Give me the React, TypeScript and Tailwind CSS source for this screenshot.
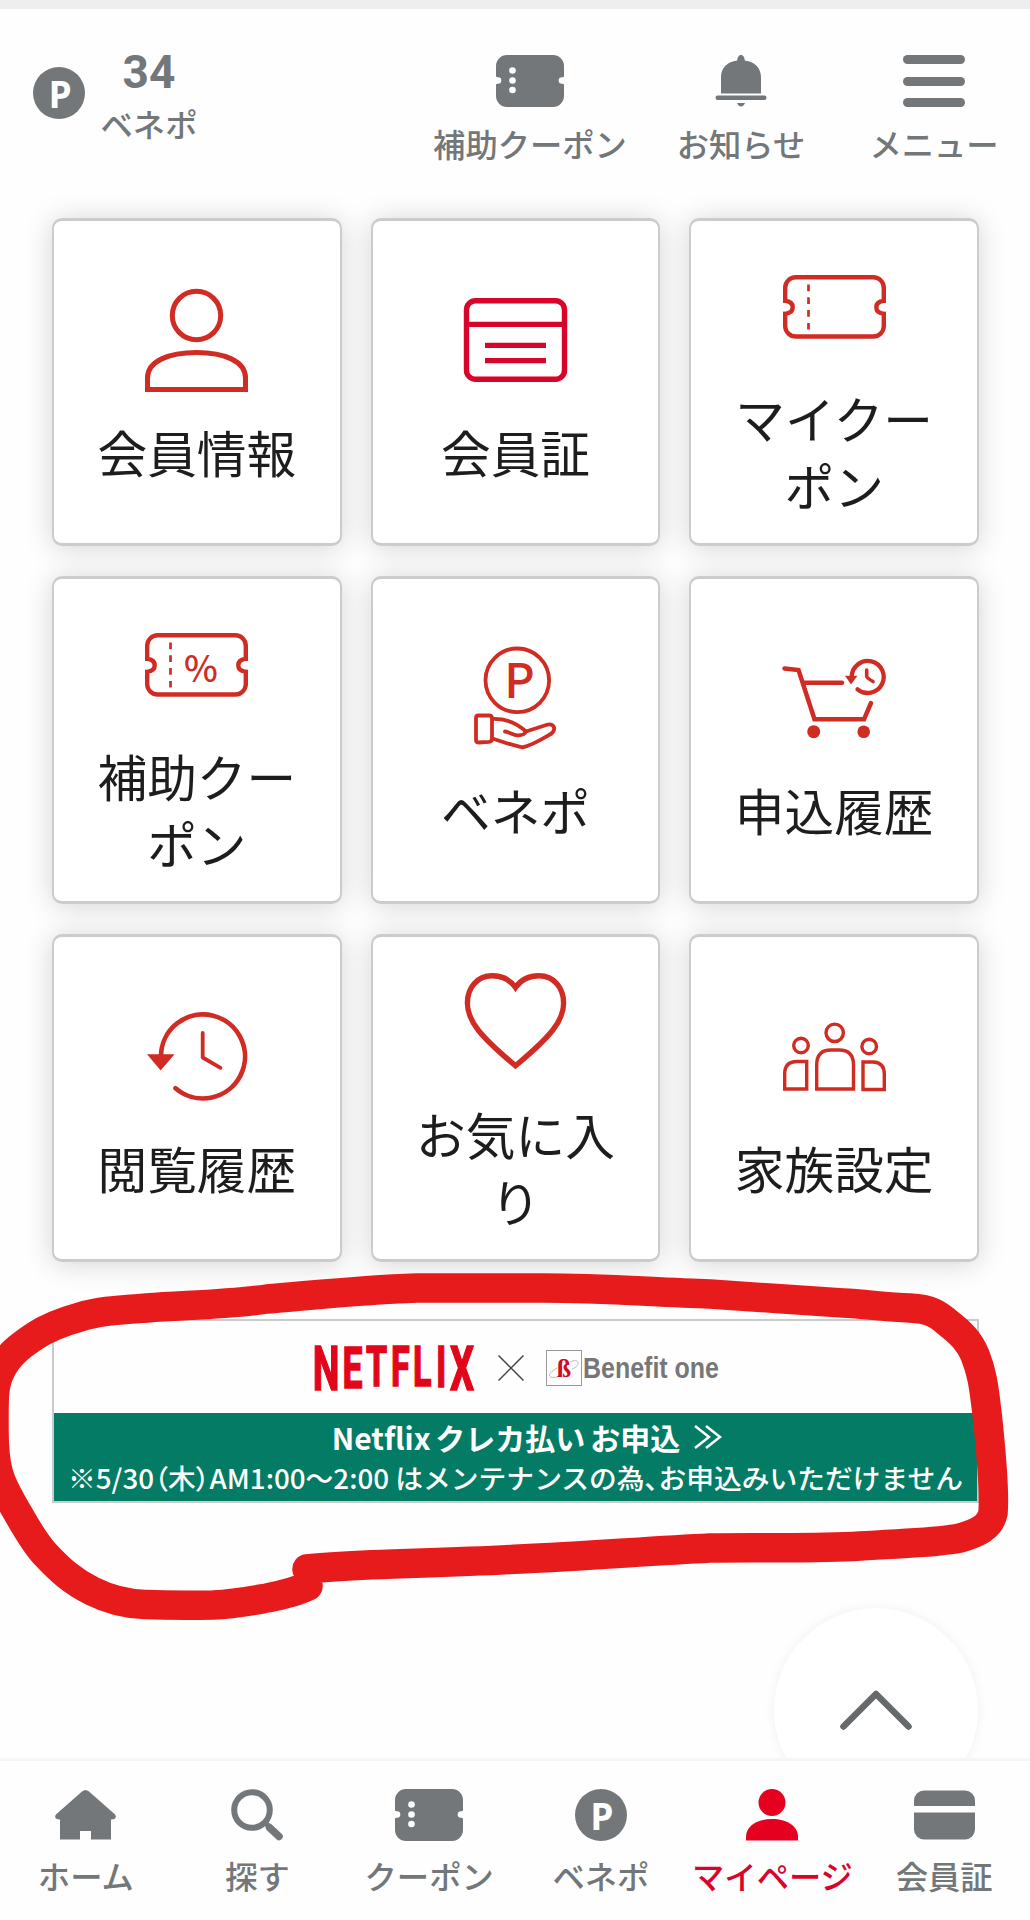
import type { ReactNode } from 'react'

const RED = '#d12c23'
const GRAY = '#737779'

function TicketSolid({ className }: { className: string }) {
  return (
    <svg viewBox="0 0 68 52" className={className} fill="none">
      <path
        d="M11 0H57A11 11 0 0 1 68 11V21.500A4.300 4.300 0 0 0 68 29.500V41A11 11 0 0 1 57 52H11A11 11 0 0 1 0 41V29.500A4.300 4.300 0 0 0 0 21.500V11A11 11 0 0 1 11 0Z"
        fill={GRAY}
      />
      <circle cx="16.500" cy="15.500" r="3.300" fill="#fff" />
      <circle cx="16.500" cy="25.500" r="3.300" fill="#fff" />
      <circle cx="16.500" cy="35" r="3.300" fill="#fff" />
      <circle cx="2" cy="25.500" r="3.300" fill="#fff" />
      <circle cx="66" cy="25.500" r="3.300" fill="#fff" />
    </svg>
  )
}

function PointBadge() {
  return (
    <span className="flex size-[52px] items-center justify-center rounded-full bg-[#737779] pl-[2px] font-[Open_Sans,sans-serif] text-[37px] leading-none font-bold text-white">
      P
    </span>
  )
}

function BellIcon() {
  return (
    <svg viewBox="0 0 52 52" className="size-[52px]" fill={GRAY}>
      <path d="M26 0C28.500 0 29.500 2.500 29.800 5.500C39.500 6.500 46 13 46 22V38.500H6V22C6 13 12.500 6.500 22.200 5.500C22.500 2.500 23.500 0 26 0Z" />
      <rect x="0.500" y="40.500" width="51" height="4.500" rx="2.200" />
      <path d="M22 48H30C29 50.500 27.500 51.500 26 51.500S23 50.500 22 48Z" />
    </svg>
  )
}

function MenuIcon() {
  return (
    <div className="flex h-[52px] w-[62px] flex-col justify-between">
      <span className="h-[9px] rounded-full bg-[#737779]" />
      <span className="h-[9px] rounded-full bg-[#737779]" />
      <span className="h-[9px] rounded-full bg-[#737779]" />
    </div>
  )
}

// 会員メニュー用の線アイコン (103x103)
function LineIcon({ children, color = RED }: { children: ReactNode; color?: string }) {
  return (
    <svg viewBox="0 0 103 103" className="size-[103px] overflow-visible" fill="none" stroke={color}>
      {children}
    </svg>
  )
}

function TicketLines() {
  return (
    <>
      <path
        d="M2.200 46V32.500A10.500 10.500 0 0 1 12.700 22.200H90.300A10.500 10.500 0 0 1 100.800 32.500V46C95.500 46.300 93.300 49 93.300 52.300S95.500 58.300 100.800 58.600V71.500A10.500 10.500 0 0 1 90.300 81.500H12.700A10.500 10.500 0 0 1 2.200 71.500V58.600C7.500 58.300 9.700 55.600 9.700 52.300S7.500 46.300 2.200 46Z"
        strokeWidth="4.400"
      />
      <path d="M0 52.300H3.500M99.500 52.300H103" stroke="#fff" strokeWidth="8" />
      <path d="M25.500 29.500V75" strokeWidth="2.700" strokeDasharray="6.700 6.100" />
    </>
  )
}

const tiles = [
  {
    label: '会員情報',
    icon: (
      <LineIcon>
        <circle cx="51.500" cy="26.500" r="24.200" strokeWidth="5" />
        <path d="M2.500 100.500V89C2.500 72 24 63.500 51.500 63.500S100.500 72 100.500 89V100.500Z" strokeWidth="5" />
      </LineIcon>
    ),
  },
  {
    label: '会員証',
    icon: (
      <LineIcon color="#d9042a">
        <rect x="2.500" y="11.800" width="98" height="78.500" rx="9" strokeWidth="5.400" />
        <path d="M2.500 35.300H100.500M21 56.300H82M21 71.700H82" strokeWidth="5.200" />
      </LineIcon>
    ),
  },
  { label: 'マイクーポン', icon: <LineIcon><TicketLines /></LineIcon> },
  {
    label: '補助クーポン',
    icon: (
      <LineIcon>
        <TicketLines />
        <text
          x="56"
          y="69"
          textAnchor="middle"
          fill={RED}
          stroke="none"
          className="font-['Noto_Sans_CJK_JP',sans-serif] text-[36px] font-medium"
        >
          %
        </text>
      </LineIcon>
    ),
  },
  {
    label: 'ベネポ',
    icon: (
      <LineIcon>
        <circle cx="53.300" cy="33.300" r="31.800" strokeWidth="3.800" />
        <text
          x="55.500"
          y="50.500"
          textAnchor="middle"
          fill={RED}
          stroke="none"
          className="font-['Noto_Sans_CJK_JP',sans-serif] text-[47px] font-medium"
        >
          P
        </text>
        <g strokeWidth="3.800" strokeLinejoin="round" strokeLinecap="round">
          <path d="M14.500 68.500H25Q28 68.500 28 71.500V92Q28 94.500 25 94.800L14.500 95.500Q12 95.500 12 92.500V71Q12 68.500 14.500 68.500Z" />
          <path d="M28.500 72C42 71.500 54 77 62 84.500L83 77.800C89 76 93 81.500 87.500 86.500C78 92 68 98.500 58.500 100.300C49 98.500 40 95.500 28.500 91.500" />
          <path d="M41 84.500C46 85 49 88.500 54 88.300C58 88.300 61 87.500 62 84.500" />
        </g>
      </LineIcon>
    ),
  },
  {
    label: '申込履歴',
    icon: (
      <LineIcon>
        <path d="M1.500 21.500L15.500 23L31.500 72.300H81L88 56M21 35.700H59" strokeWidth="4.500" strokeLinecap="round" />
        <circle cx="30.700" cy="84.700" r="6.500" fill={RED} stroke="none" />
        <circle cx="80.700" cy="84.700" r="6.300" fill={RED} stroke="none" />
        <path d="M68.700 30A16 16 0 1 1 74.500 42.300" strokeWidth="4.300" strokeLinecap="round" />
        <path d="M62 28.700H74.500L68 37.500Z" fill={RED} stroke="none" />
        <path d="M83.700 23V29.500Q84 31 90 34.500" strokeWidth="3.600" strokeLinecap="round" />
      </LineIcon>
    ),
  },
  {
    label: '閲覧履歴',
    icon: (
      <LineIcon>
        <path d="M16 51A42 42 0 1 1 30.500 83.200" strokeWidth="4.700" strokeLinecap="round" />
        <path d="M2 49.200H29.500L15.700 65.500Z" fill={RED} stroke="none" />
        <path d="M57.700 28V52.500L75.500 62.800" strokeWidth="3.800" strokeLinecap="round" strokeLinejoin="round" />
      </LineIcon>
    ),
  },
  {
    label: 'お気に入り',
    icon: (
      <LineIcon>
        <path
          d="M51.500 16.500C46 8.500 37.500 4.800 28 4.800C13 4.800 3.400 17 3.400 32C3.400 50 16 65 51.500 94.800C87 65 99.600 50 99.600 32C99.600 17 90 4.800 75 4.800C65.500 4.800 57 8.500 51.500 16.500Z"
          strokeWidth="5.400"
        />
      </LineIcon>
    ),
  },
  {
    label: '家族設定',
    icon: (
      <LineIcon>
        <g strokeWidth="3.400">
          <circle cx="51.700" cy="27.800" r="8.700" />
          <circle cx="18" cy="40.500" r="7.300" />
          <circle cx="86.200" cy="41.500" r="7.300" />
          <path d="M33.700 84V60Q33.700 45 48 45H56Q70.500 45 70.500 60V84Z" />
          <path d="M1.700 84V69Q1.700 56.500 14 56.500H23.700V84Z" />
          <path d="M80 84.500V57H90Q101.300 57.500 101.300 69V84.500Z" />
        </g>
      </LineIcon>
    ),
  },
]

const nav = [
  {
    label: 'ホーム',
    icon: (
      <svg viewBox="0 0 61 52" className="h-[52px] w-[61px]" fill={GRAY}>
        <path d="M27 2.500Q30.500 -0.500 34 2.500L59.500 25Q62 27.500 60 29.500Q59 30.500 56 30.500V50.500H36V42H25V50.500H5V30.500Q2 30.500 1 29.500Q-1 27.500 1.500 25Z" />
      </svg>
    ),
  },
  {
    label: '探す',
    icon: (
      <svg viewBox="0 0 52 52" className="size-[52px]" fill="none" stroke={GRAY}>
        <circle cx="21" cy="21" r="17.800" strokeWidth="6" />
        <path d="M35 34.500L39 38.500" strokeWidth="5" />
        <path d="M38.500 38.500L48 47.500" strokeWidth="7.500" strokeLinecap="round" />
      </svg>
    ),
  },
  { label: 'クーポン', icon: <TicketSolid className="h-[52px] w-[68px]" /> },
  { label: 'ベネポ', icon: <PointBadge /> },
  {
    label: 'マイページ',
    active: true,
    icon: (
      <svg viewBox="0 0 52 52" className="size-[52px]" fill="#e50020">
        <circle cx="26" cy="13.500" r="13.500" />
        <path d="M0 51.500V48C0 37 11 30 26 30S52 37 52 48V51.500Z" />
      </svg>
    ),
  },
  {
    label: '会員証',
    icon: (
      <svg viewBox="0 0 61 52" className="h-[52px] w-[61px]" fill={GRAY}>
        <path d="M10 1.500H51A10 10 0 0 1 61 11.500V17H0V11.500A10 10 0 0 1 10 1.500Z" />
        <path d="M0 23.500H61V40.500A10 10 0 0 1 51 50.500H10A10 10 0 0 1 0 40.500Z" />
      </svg>
    ),
  },
]

function Header() {
  return (
    <header className="flex h-[208px] items-start border-t-[9px] border-[#eeeeee] pl-[33px] text-[32.300px] leading-[48px] font-medium text-[#737779]">
      <div className="mt-[58px]">
        <PointBadge />
      </div>
      <div className="mt-[39px] ml-[16px] flex w-[96px] flex-col items-center">
        <span className="font-[Roboto,sans-serif] text-[46px] leading-[48px] font-bold">34</span>
        <span className="mt-[3px] whitespace-nowrap">ベネポ</span>
      </div>
      <div className="mt-[46px] ml-[236px] flex w-[194px] flex-col items-center gap-[12px]">
        <TicketSolid className="h-[52px] w-[68px]" />
        <span className="whitespace-nowrap">補助クーポン</span>
      </div>
      <div className="mt-[46px] ml-[49px] flex w-[130px] flex-col items-center gap-[12px]">
        <BellIcon />
        <span className="whitespace-nowrap">お知らせ</span>
      </div>
      <div className="mt-[46px] ml-[63px] flex w-[130px] flex-col items-center gap-[12px]">
        <MenuIcon />
        <span className="whitespace-nowrap">メニュー</span>
      </div>
    </header>
  )
}

// 両端の文字ほど下に伸びるロゴ
function NetflixLogo() {
  return (
    <svg viewBox="0 0 159 46" className="h-[46px] w-[159px] overflow-visible">
      <g transform="scale(0.62 1)" fill="#e2061a" stroke="#e2061a" strokeWidth="1.600">
        <text textAnchor="middle" className="font-['Roboto',sans-serif] font-bold">
          <tspan x="18" y="45" fontSize="61">N</tspan>
          <tspan x="60.500" y="42.500" fontSize="57.500">E</tspan>
          <tspan x="99.500" y="40.500" fontSize="55">T</tspan>
          <tspan x="137.500" y="40.500" fontSize="55">F</tspan>
          <tspan x="173" y="40.500" fontSize="55">L</tspan>
          <tspan x="203.500" y="42" fontSize="57.500">I</tspan>
          <tspan x="237" y="45" fontSize="61">X</tspan>
        </text>
      </g>
    </svg>
  )
}

function Banner() {
  return (
    <section className="mr-[51px] ml-[52px] mt-[57px] flex h-[184px] flex-col border-2 border-[#c9cccc]">
      <div className="flex h-[92px] items-center pt-[2px] pl-[261px]">
        <NetflixLogo />
        <svg viewBox="0 0 26 26" className="ml-[24px] size-[26px]" stroke="#444" strokeWidth="1.500">
          <path d="M0.500 0.500L25.500 25.500M25.500 0.500L0.500 25.500" />
        </svg>
        <div className="ml-[22px] flex size-[36px] items-center justify-center border border-[#999]">
          <svg viewBox="0 0 34 34" className="size-[34px]">
            <path d="M10 17C-2 24 2 28 10 26M23 11C34 6 33 16 25 18" fill="none" stroke="#bbb" />
            <text x="17" y="26" textAnchor="middle" fill="#d20a26" className="font-['Liberation_Serif',serif] text-[26px] font-bold">
              ß
            </text>
          </svg>
        </div>
        <svg viewBox="0 0 138 36" className="ml-[1px] h-[36px] w-[138px] overflow-visible">
          <text
            x="0"
            y="28"
            textLength="136"
            lengthAdjust="spacingAndGlyphs"
            fill="#777"
            className="font-['Liberation_Sans',sans-serif] text-[29px] font-bold"
          >
            Benefit one
          </text>
        </svg>
      </div>
      <div className="flex flex-1 flex-col items-center bg-[#047b64] text-white">
        <div className="mt-[5px] ml-[23px] flex items-center text-[30px] leading-[38px] font-bold whitespace-nowrap">
          <span className="[word-spacing:-2px]">Netflix クレカ払い お申込</span>
          <svg viewBox="0 0 28 24" className="ml-[14px] h-[24px] w-[28px]" fill="none" stroke="#fff" strokeWidth="2.500">
            <path d="M1 1L15 12L1 23M12 1L26 12L12 23" />
          </svg>
        </div>
        <svg viewBox="0 0 896 42" className="h-[42px] w-[896px] overflow-visible">
          <text x="0" y="33" textLength="895" lengthAdjust="spacingAndGlyphs" fill="#fff" className="text-[27px] font-medium">
            ※5/30
            <tspan className="[font-feature-settings:'palt']">（木）</tspan>
            AM1:00〜2:00 はメンテナンスの為
            <tspan className="[font-feature-settings:'palt']">、</tspan>
            お申込みいただけません
          </text>
        </svg>
      </div>
    </section>
  )
}

export default function App() {
  return (
    <div className="relative flex h-[1920px] w-[1030px] flex-col overflow-hidden bg-[#fefefe] font-['Noto_Sans_CJK_JP',sans-serif]">
      <Header />

      <main className="flex-1">
        <div className="mr-[51px] ml-[52px] mt-[10px] grid grid-cols-3 gap-x-[29px] gap-y-[30px]">
          {tiles.map((tile) => (
            <div
              key={tile.label}
              className="flex h-[328px] flex-col items-center justify-center gap-[26px] rounded-[10px] border-x-2 border-y-[3px] border-[#cccccc] bg-white pt-[9px] shadow-[0_2px_28px_rgba(0,0,0,0.17)]"
            >
              {tile.icon}
              <span className="w-[205px] text-center text-[49.700px] leading-[67px] text-[#1d1d1d]">{tile.label}</span>
            </div>
          ))}
        </div>
        <Banner />
      </main>

      {/* ページ上部へ戻る */}
      <button className="absolute top-[1608px] left-[774px] flex size-[204px] items-center justify-center rounded-full bg-white shadow-[0_0_12px_rgba(0,0,0,0.06)]">
        <svg viewBox="0 0 72 40" className="size-[72px]" fill="none" stroke="#666a6c" strokeWidth="6.500" strokeLinecap="round" strokeLinejoin="round">
          <path d="M3.500 36.500L36 4L68.500 36.500" />
        </svg>
      </button>

      <nav className="relative grid h-[162px] grid-cols-6 border-t-[3px] border-[#f6f6f6] bg-[#fefefe] pt-[28px]">
        {nav.map((item) => (
          <div key={item.label} className="flex flex-col items-center gap-[10px]">
            {item.icon}
            <span
              className={`text-[32.300px] leading-[48px] font-medium whitespace-nowrap ${
                item.active ? 'text-[#d9042a]' : 'text-[#737779]'
              }`}
            >
              {item.label}
            </span>
          </div>
        ))}
      </nav>

      {/* 手書きの囲み */}
      <svg
        viewBox="0 0 1030 1920"
        className="pointer-events-none absolute inset-0 size-full"
        fill="none"
        stroke="#e71b1c"
        strokeWidth="29.500"
        strokeLinecap="round"
        strokeLinejoin="round"
      >
        <path d="M307 1569C325 1567 345 1566 367 1565C420 1563 470 1562 520 1559C585 1556 650 1551 710 1548C760 1547 815 1549 860 1546C905 1543 935 1543 960 1538C978 1533 990 1527 993 1513C995 1490 991 1450 987 1413C984 1390 983 1375 975 1355C969 1341 961 1333 948 1323C938 1314 930 1309 910 1308C885 1307 865 1304 843 1303C800 1300 750 1297 710 1294C650 1292 600 1288 543 1288H417C360 1290 315 1295 267 1299C225 1305 185 1305 147 1308C120 1310 98 1311 80 1317C62 1322 47 1328 35 1336C20 1346 8 1355 1 1370C-7 1385 -6 1400 -6 1430C-6 1470 0 1482 12 1503C22 1520 32 1540 45 1554C60 1570 72 1581 92 1591C110 1600 128 1604 145 1604.500C168 1605.500 190 1605.500 213 1605C235 1604 250 1601 267 1598C282 1595 296 1592 308 1586" />
      </svg>
    </div>
  )
}
